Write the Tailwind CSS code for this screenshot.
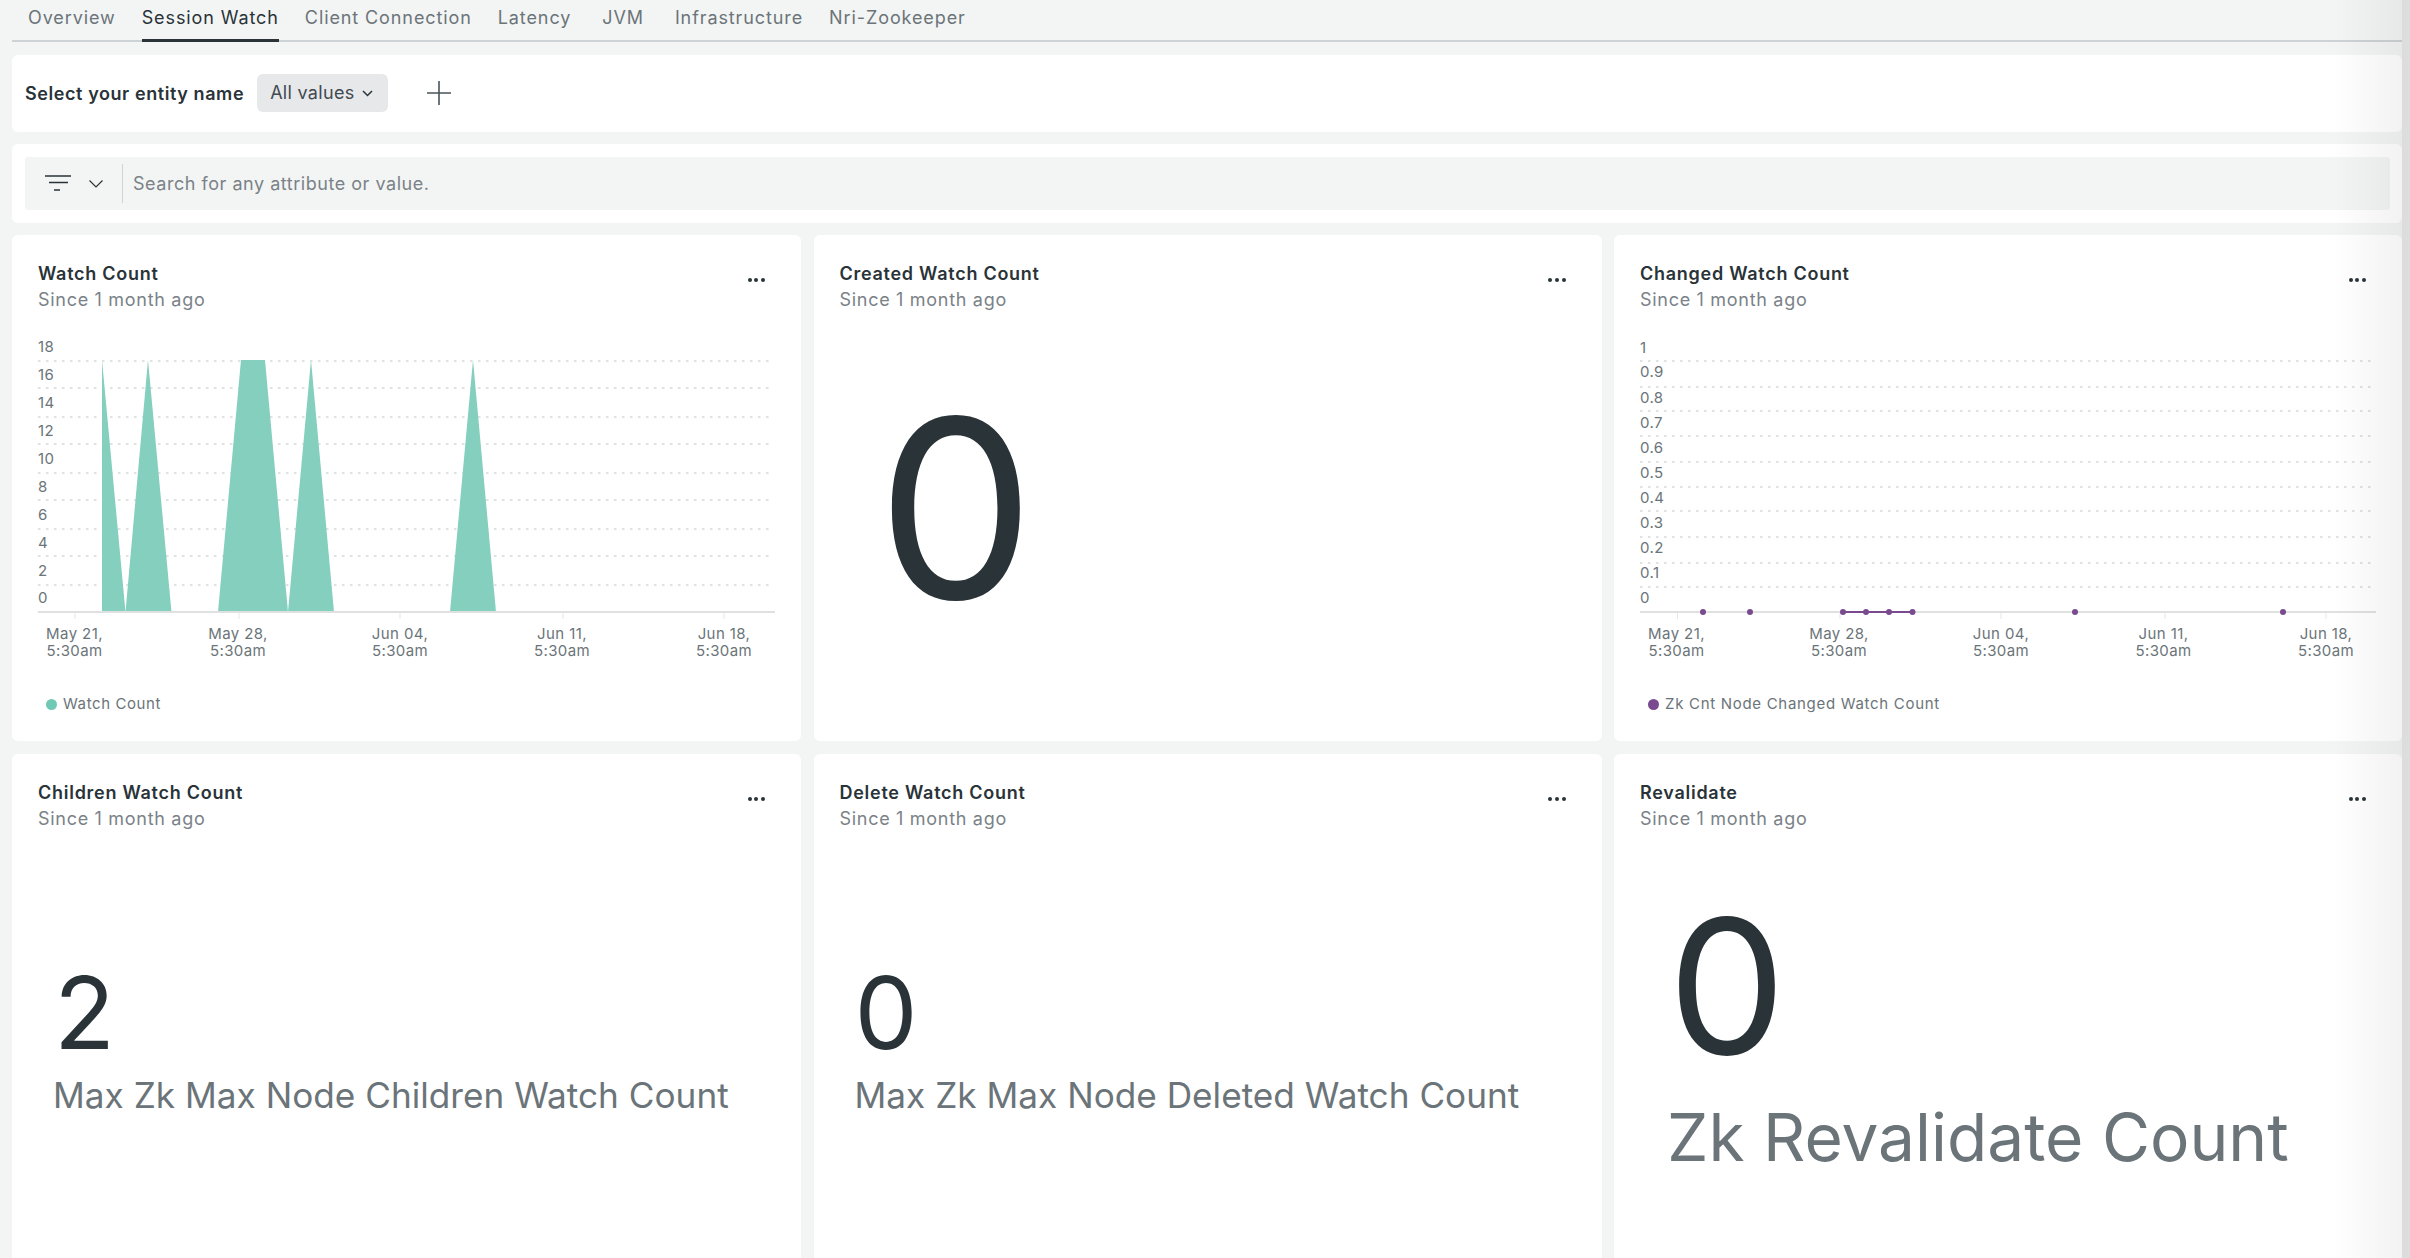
<!DOCTYPE html>
<html lang="en">
<head>
    <meta charset="UTF-8">
    <title>Session Watch</title>
    <script src="https://cdn.jsdelivr.net/npm/@tailwindcss/browser@4"></script>
</head>
<body class="relative h-[1258px] w-[2410px] overflow-hidden bg-[#f3f5f4] font-['Inter',sans-serif] text-[#293338]">
    <!-- Tabs -->
    <div class="mr-[8px] ml-[12px] flex h-[42px] gap-[26px] border-b-2 border-[#cdd3d4] pl-[16px] text-[18px] tracking-[0.9px] text-[#6b7479]">
        <div class="h-[42px] pt-[4px]">Overview</div>
        <div class="h-[42px] border-b-[3px] border-[#293338] pt-[4px] text-[#293338]">Session Watch</div>
        <div class="h-[42px] pt-[4px]">Client Connection</div>
        <div class="h-[42px] pt-[4px] pr-[5px]">Latency</div>
        <div class="h-[42px] pt-[4px] pr-[5px]">JVM</div>
        <div class="h-[42px] pt-[4px]">Infrastructure</div>
        <div class="h-[42px] pt-[4px]">Nri-Zookeeper</div>
    </div>

    <!-- Entity picker -->
    <div class="mt-[13px] mr-[8px] ml-[12px] flex h-[77px] items-center rounded-[6px] bg-white pb-[1px] pl-[13px]">
        <span class="text-[18px] font-semibold tracking-[0.58px]">Select your entity name</span>
        <div class="ml-[13px] flex h-[38px] w-[131px] items-center rounded-[6px] bg-[#e7e8ea] pb-[1px] pl-[13px] text-[18px] tracking-[0.3px] text-[#3f4a50]">
            All values
            <svg class="mt-[2px] ml-[8px]" width="11" height="7" viewBox="0 0 11 7" fill="none" stroke="#293338" stroke-width="1.5"><path d="M1 1l4.5 4.5L10 1"/></svg>
        </div>
        <svg class="ml-[39px]" width="24" height="24" viewBox="0 0 24 24" stroke="#4a5459" stroke-width="1.6"><path d="M0 12h24M12 0v24"/></svg>
    </div>

    <!-- Filter bar -->
    <div class="mt-[12px] mr-[8px] ml-[12px] h-[79px] rounded-[6px] bg-white px-[13px] pt-[13px]">
        <div class="flex h-[53px] w-[2365px] items-center rounded-[3px] bg-[#f3f5f4]">
            <svg class="ml-[20px]" width="26" height="17" viewBox="0 0 26 17" fill="none" stroke="#293338" stroke-width="1.6"><path d="M0 1h26M4 7.500h19M9 15h6"/></svg>
            <svg class="ml-[18px]" width="14" height="8" viewBox="0 0 14 8" fill="none" stroke="#293338" stroke-width="1.2"><path d="M0.500 0.500L7 7l6.500-6.500"/></svg>
            <div class="ml-[19px] h-[39px] w-px bg-[#cfd3d4]"></div>
            <span class="ml-[10px] text-[18px] tracking-[0.53px] text-[#7a8288]">Search for any attribute or value.</span>
        </div>
    </div>

    <!-- Widgets -->
    <div class="mt-[12px] ml-[12px] grid grid-cols-[789px_788px_788px] gap-x-[12.500px] gap-y-[13px]">

        <!-- Watch Count -->
        <div class="h-[506px] rounded-[6px] bg-white">
            <div class="flex h-[95px] justify-between pt-[26.500px] pr-[36px] pl-[26px]">
                <div>
                    <div class="text-[18px] leading-[24px] font-semibold tracking-[0.73px]">Watch Count</div>
                    <div class="mt-[2.500px] text-[18px] leading-[24px] tracking-[0.7px] text-[#7a8288]">Since 1 month ago</div>
                </div>
                <div class="mt-[16.500px] flex h-[4px] gap-[2.600px]"><i class="size-[4px] rounded-full bg-[#293338]"></i><i class="size-[4px] rounded-full bg-[#293338]"></i><i class="size-[4px] rounded-full bg-[#293338]"></i></div>
            </div>
            <svg width="788" height="340" class="font-['Inter',sans-serif] text-[15px] tracking-[0.4px]" fill="#6b7479">
                <g stroke="#d5d9d9" stroke-width="1.5" stroke-dasharray="2.500 5.500">
                    <path d="M26 31H758M26 58H758M26 87H758M26 114H758M26 143H758M26 170H758M26 199H758M26 226H758M26 255H758"/>
                </g>
                <g fill="#84cfbe">
                    <path d="M90 282V30L113.500 282Z"/>
                    <path d="M113.500 282L136 30L159.500 282Z"/>
                    <path d="M206 282L229 30H253L276 282Z"/>
                    <path d="M276 282L299 30L322 282Z"/>
                    <path d="M438 282L461 30L484 282Z"/>
                </g>
                <path d="M26 282H763" stroke="#dfe1e1" stroke-width="2"/>
                <path d="M63 283v6M227 283v6M388 283v6M551 283v6M712 283v6" stroke="#e5e7e7"/>
                <g dominant-baseline="central">
                    <text x="26" y="16">18</text><text x="26" y="44">16</text><text x="26" y="72">14</text><text x="26" y="100">12</text><text x="26" y="128">10</text><text x="26" y="156">8</text><text x="26" y="184">6</text><text x="26" y="212">4</text><text x="26" y="240">2</text><text x="26" y="267">0</text>
                </g>
                <g text-anchor="middle" dominant-baseline="central">
                    <text x="62.500" y="303">May 21,</text><text x="62.500" y="320">5:30am</text>
                    <text x="226" y="303">May 28,</text><text x="226" y="320">5:30am</text>
                    <text x="388" y="303">Jun 04,</text><text x="388" y="320">5:30am</text>
                    <text x="550" y="303">Jun 11,</text><text x="550" y="320">5:30am</text>
                    <text x="712" y="303">Jun 18,</text><text x="712" y="320">5:30am</text>
                </g>
            </svg>
            <div class="mt-[24px] ml-[34px] flex h-[20px] items-center text-[15px] tracking-[0.6px] text-[#6b7479]">
                <i class="mr-[6px] size-[11px] rounded-full bg-[#6fc9b5]"></i>Watch Count
            </div>
        </div>

        <!-- Created Watch Count -->
        <div class="h-[506px] rounded-[6px] bg-white">
            <div class="flex h-[95px] justify-between pt-[26.500px] pr-[36px] pl-[26px]">
                <div>
                    <div class="text-[18px] leading-[24px] font-semibold tracking-[0.73px]">Created Watch Count</div>
                    <div class="mt-[2.500px] text-[18px] leading-[24px] tracking-[0.7px] text-[#7a8288]">Since 1 month ago</div>
                </div>
                <div class="mt-[16.500px] flex h-[4px] gap-[2.600px]"><i class="size-[4px] rounded-full bg-[#293338]"></i><i class="size-[4px] rounded-full bg-[#293338]"></i><i class="size-[4px] rounded-full bg-[#293338]"></i></div>
            </div>
            <div class="mt-[53px] pl-[63.500px] text-[250px] leading-none">0</div>
        </div>

        <!-- Changed Watch Count -->
        <div class="h-[506px] rounded-[6px] bg-white">
            <div class="flex h-[95px] justify-between pt-[26.500px] pr-[36px] pl-[26px]">
                <div>
                    <div class="text-[18px] leading-[24px] font-semibold tracking-[0.73px]">Changed Watch Count</div>
                    <div class="mt-[2.500px] text-[18px] leading-[24px] tracking-[0.7px] text-[#7a8288]">Since 1 month ago</div>
                </div>
                <div class="mt-[16.500px] flex h-[4px] gap-[2.600px]"><i class="size-[4px] rounded-full bg-[#293338]"></i><i class="size-[4px] rounded-full bg-[#293338]"></i><i class="size-[4px] rounded-full bg-[#293338]"></i></div>
            </div>
            <svg width="788" height="340" class="font-['Inter',sans-serif] text-[15px] tracking-[0.4px]" fill="#6b7479">
                <g stroke="#d5d9d9" stroke-width="1.5" stroke-dasharray="2.500 5.500">
                    <path d="M26 31H757M26 57H757M26 81H757M26 106H757M26 132H757M26 157H757M26 181H757M26 207H757M26 233H757M26 257H757"/>
                </g>
                <path d="M26 282H762" stroke="#dfe1e1" stroke-width="2"/>
                <path d="M63.500 283v6M226 283v6M387 283v6M551 283v6M712 283v6" stroke="#e5e7e7"/>
                <path d="M229 282H298.500" stroke="#7a4a8f" stroke-width="2"/>
                <g fill="#7a4a8f">
                    <circle cx="89" cy="282" r="3"/><circle cx="136" cy="282" r="3"/><circle cx="229" cy="282" r="3"/><circle cx="252" cy="282" r="3"/><circle cx="275" cy="282" r="3"/><circle cx="298.500" cy="282" r="3"/><circle cx="461" cy="282" r="3"/><circle cx="669" cy="282" r="3"/>
                </g>
                <g dominant-baseline="central">
                    <text x="26" y="17">1</text><text x="26" y="41">0.9</text><text x="26" y="67">0.8</text><text x="26" y="92">0.7</text><text x="26" y="117">0.6</text><text x="26" y="142">0.5</text><text x="26" y="167">0.4</text><text x="26" y="192">0.3</text><text x="26" y="217">0.2</text><text x="26" y="242">0.1</text><text x="26" y="267">0</text>
                </g>
                <g text-anchor="middle" dominant-baseline="central">
                    <text x="62.500" y="303">May 21,</text><text x="62.500" y="320">5:30am</text>
                    <text x="225" y="303">May 28,</text><text x="225" y="320">5:30am</text>
                    <text x="387" y="303">Jun 04,</text><text x="387" y="320">5:30am</text>
                    <text x="549.500" y="303">Jun 11,</text><text x="549.500" y="320">5:30am</text>
                    <text x="712" y="303">Jun 18,</text><text x="712" y="320">5:30am</text>
                </g>
            </svg>
            <div class="mt-[24px] ml-[34px] flex h-[20px] items-center text-[15px] tracking-[0.7px] text-[#6b7479]">
                <i class="mr-[6px] size-[11px] rounded-full bg-[#7a4a8f]"></i>Zk Cnt Node Changed Watch Count
            </div>
        </div>

        <!-- Children Watch Count -->
        <div class="h-[520px] rounded-[6px] bg-white">
            <div class="flex h-[95px] justify-between pt-[26.500px] pr-[36px] pl-[26px]">
                <div>
                    <div class="text-[18px] leading-[24px] font-semibold tracking-[0.73px]">Children Watch Count</div>
                    <div class="mt-[2.500px] text-[18px] leading-[24px] tracking-[0.7px] text-[#7a8288]">Since 1 month ago</div>
                </div>
                <div class="mt-[16.500px] flex h-[4px] gap-[2.600px]"><i class="size-[4px] rounded-full bg-[#293338]"></i><i class="size-[4px] rounded-full bg-[#293338]"></i><i class="size-[4px] rounded-full bg-[#293338]"></i></div>
            </div>
            <div class="mt-[114px] pl-[42px] text-[100px] leading-none">2</div>
            <div class="mt-[10px] pl-[41px] text-[35.200px] leading-[44px] text-[#6b7479]">Max Zk Max Node Children Watch Count</div>
        </div>

        <!-- Delete Watch Count -->
        <div class="h-[520px] rounded-[6px] bg-white">
            <div class="flex h-[95px] justify-between pt-[26.500px] pr-[36px] pl-[26px]">
                <div>
                    <div class="text-[18px] leading-[24px] font-semibold tracking-[0.73px]">Delete Watch Count</div>
                    <div class="mt-[2.500px] text-[18px] leading-[24px] tracking-[0.7px] text-[#7a8288]">Since 1 month ago</div>
                </div>
                <div class="mt-[16.500px] flex h-[4px] gap-[2.600px]"><i class="size-[4px] rounded-full bg-[#293338]"></i><i class="size-[4px] rounded-full bg-[#293338]"></i><i class="size-[4px] rounded-full bg-[#293338]"></i></div>
            </div>
            <div class="mt-[114px] pl-[41px] text-[100px] leading-none">0</div>
            <div class="mt-[10px] pl-[41px] text-[35.200px] leading-[44px] text-[#6b7479]">Max Zk Max Node Deleted Watch Count</div>
        </div>

        <!-- Revalidate -->
        <div class="h-[520px] rounded-[6px] bg-white">
            <div class="flex h-[95px] justify-between pt-[26.500px] pr-[36px] pl-[26px]">
                <div>
                    <div class="text-[18px] leading-[24px] font-semibold tracking-[0.73px]">Revalidate</div>
                    <div class="mt-[2.500px] text-[18px] leading-[24px] tracking-[0.7px] text-[#7a8288]">Since 1 month ago</div>
                </div>
                <div class="mt-[16.500px] flex h-[4px] gap-[2.600px]"><i class="size-[4px] rounded-full bg-[#293338]"></i><i class="size-[4px] rounded-full bg-[#293338]"></i><i class="size-[4px] rounded-full bg-[#293338]"></i></div>
            </div>
            <div class="mt-[44px] pl-[54px] text-[187px] leading-none">0</div>
            <div class="mt-[17px] pl-[53px] text-[65.800px] leading-[80px] text-[#6b7479]">Zk Revalidate Count</div>
        </div>
    </div>

    <!-- Fade at the right edge -->
    <div class="absolute top-0 right-[8px] h-full w-[70px] bg-gradient-to-r from-black/0 to-black/5"></div>
    <div class="absolute top-0 right-0 h-full w-[8px] bg-[#dcdddc]"></div>
</body>
</html>
